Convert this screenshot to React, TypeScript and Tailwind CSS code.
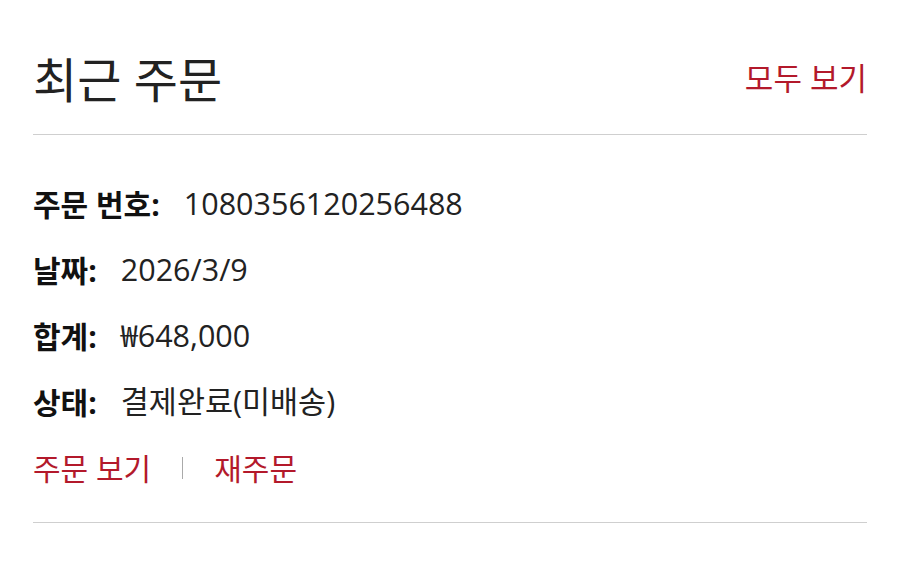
import React from "react";

const font = { fontFamily: '"Open Sans", "Noto Sans CJK KR", "Noto Sans", sans-serif' };

function Row({ label, value }: { label: string; value: string }) {
  return (
    <div className="flex items-center h-[66px]">
      <span className="font-bold text-[30px] text-[#111]">{label}</span>
      <span className="ml-[24px] text-[30.5px] text-[#222]">{value}</span>
    </div>
  );
}

export default function App() {
  return (
    <div className="w-[900px] h-[564px] bg-white px-[33px]" style={font}>
      <div className="flex items-center justify-between h-[135px] border-b border-[#cfcfcf] pt-[26px]">
        <h1 className="text-[48px] text-[#222] font-normal leading-none">최근 주문</h1>
        <a className="text-[31px] text-[#b3192b] leading-none pb-[4px]">모두 보기</a>
      </div>
      <div className="pt-[36px] pb-[21px] border-b border-[#cfcfcf]">
        <Row label="주문 번호:" value="1080356120256488" />
        <Row label="날짜:" value="2026/3/9" />
        <Row label="합계:" value="₩648,000" />
        <Row label="상태:" value="결제완료(미배송)" />
        <div className="flex items-center h-[66px] text-[30px] text-[#b3192b]">
          <span>주문 보기</span>
          <span className="mx-[31px] w-px h-[22px] bg-[#aaa]" />
          <span>재주문</span>
        </div>
      </div>
    </div>
  );
}
